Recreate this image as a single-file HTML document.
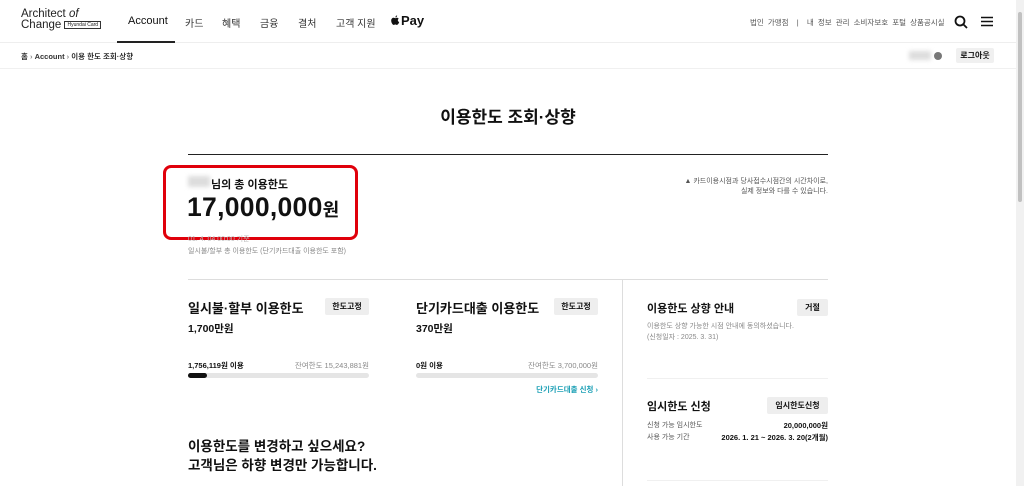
<!DOCTYPE html>
<html><head><meta charset="utf-8"><style>
*{margin:0;padding:0;box-sizing:border-box}
body{width:1024px;height:486px;overflow:hidden;background:#fff;font-family:"Liberation Sans","Noto Sans CJK KR",sans-serif;color:#111;position:relative}
.a{position:absolute;white-space:nowrap}
.btn{position:absolute;background:#eee;font-size:8px;font-weight:bold;display:flex;align-items:center;justify-content:center;border-radius:2px}
.g{color:#888}
</style></head><body>
<div class="a" style="left:0;top:0;width:1024px;height:43px;border-bottom:1px solid #eee"></div>
<div class="a" style="left:21px;top:9px;font-size:11.5px;line-height:11px;color:#222">Architect <i>of</i><br>Change <span style="font-size:5px;border:1px solid #333;padding:0 2px;vertical-align:2px">Hyundai Card</span></div>
<div class="a" style="left:128px;top:15px;font-size:11px">Account</div>
<div class="a" style="left:117px;top:41px;width:58px;height:2px;background:#222"></div>
<div class="a" style="left:185px;top:15px;font-size:10px;color:#333">카드</div>
<div class="a" style="left:222px;top:15px;font-size:10px;color:#333">혜택</div>
<div class="a" style="left:260px;top:15px;font-size:10px;color:#333">금융</div>
<div class="a" style="left:298px;top:15px;font-size:10px;color:#333">결처</div>
<div class="a" style="left:336px;top:15px;font-size:10px;color:#333">고객 지원</div>
<svg class="a" style="left:391px;top:15px" width="9" height="11" viewBox="0 0 9 11"><path d="M4.5 3.2C5.3 2.6 6.8 2.5 7.7 3.8C6.4 4.6 6.6 6.6 8.2 7.1C7.7 8.5 6.9 9.9 5.9 9.9C5.2 9.9 5 9.5 4.3 9.5C3.6 9.5 3.3 9.9 2.7 9.9C1.6 9.9 0.2 7.5 0.2 5.6C0.2 3.6 1.6 2.7 2.8 2.8C3.5 2.8 4 3.2 4.5 3.2Z" fill="#111"/><path d="M4.4 2.5C4.3 1.5 5.1 0.5 6.1 0.4C6.2 1.4 5.3 2.5 4.4 2.5Z" fill="#111"/></svg>
<div class="a" style="left:401px;top:13px;font-size:13px;font-weight:bold">Pay</div>
<div class="a" style="left:750px;top:17px;font-size:7.5px;color:#555;word-spacing:2px">법인 가맹점 &nbsp;| &nbsp;내 정보 관리 소비자보호 포털 상품공시실</div>
<svg class="a" style="left:954px;top:15px" width="14" height="14"><circle cx="6" cy="6" r="4.5" fill="none" stroke="#111" stroke-width="1.8"/><line x1="9.5" y1="9.5" x2="13" y2="13" stroke="#111" stroke-width="1.8"/></svg>
<svg class="a" style="left:981px;top:16px" width="12" height="11"><path d="M0 1.5H12M0 5.5H12M0 9.5H12" stroke="#111" stroke-width="1.5"/></svg>
<div class="a" style="left:1016px;top:0;width:8px;height:486px;background:#f1f1f1"></div>
<div class="a" style="left:1018px;top:12px;width:4px;height:190px;background:#c1c1c1;border-radius:2px"></div>
<div class="a" style="left:0;top:68px;width:1016px;border-bottom:1px solid #f0f0f0"></div>
<div class="a" style="left:21px;top:51px;font-size:7.5px;font-weight:bold;color:#333">홈 <span class="g">›</span> Account <span class="g">›</span> 이용 한도 조회·상향</div>
<div class="a" style="left:909px;top:51px;width:22px;height:9px;background:#ddd;filter:blur(2px)"></div>
<div class="a" style="left:934px;top:52px;width:8px;height:8px;border-radius:50%;background:#777"></div>
<div class="btn" style="left:956px;top:48px;width:38px;height:15px;background:#f0f0f0">로그아웃</div>
<div class="a" style="left:0;width:1016px;top:103px;text-align:center;font-size:17px;font-weight:bold">이용한도 조회·상향</div>
<div class="a" style="left:188px;top:154px;width:640px;height:1px;background:#222"></div>
<div class="a" style="left:163px;top:165px;width:195px;height:75px;border:3px solid #e0000b;border-radius:8px"></div>
<div class="a" style="left:188px;top:176px;width:22px;height:11px;background:#ddd;filter:blur(2px)"></div>
<div class="a" style="left:211px;top:176px;font-size:11px;font-weight:bold">님의 총 이용한도</div>
<div class="a" style="left:187px;top:192px;font-size:26.5px;font-weight:bold;letter-spacing:0.3px">17,000,000<span style="font-size:18px">원</span></div>
<div class="a g" style="left:188px;top:234px;font-size:7px;color:#bbb">01. 4. 04 00:00 기준</div>
<div class="a g" style="left:188px;top:246px;font-size:7px">일시불/할부 총 이용한도 (단기카드대출 이용한도 포함)</div>
<div class="a" style="right:196px;top:177px;font-size:7px;color:#555;text-align:right;line-height:10px">▲ 카드이용시점과 당사접수시점간의 시간차이로,<br>실제 정보와 다를 수 있습니다.</div>
<div class="a" style="left:188px;top:279px;width:640px;height:1px;background:#ddd"></div>
<div class="a" style="left:622px;top:280px;width:1px;height:206px;background:#ddd"></div>
<div class="a" style="left:188px;top:298px;font-size:13px;font-weight:bold">일시불·할부 이용한도</div>
<div class="btn" style="left:325px;top:298px;width:44px;height:17px">한도고정</div>
<div class="a" style="left:188px;top:321px;font-size:10.5px;font-weight:bold">1,700만원</div>
<div class="a" style="left:188px;top:360px;font-size:7.5px;font-weight:bold">1,756,119원 이용</div>
<div class="a g" style="left:293px;top:360px;font-size:7.5px;width:76px;text-align:right">잔여한도 15,243,881원</div>
<div class="a" style="left:188px;top:373px;width:181px;height:5px;background:#e5e5e5;border-radius:3px"></div>
<div class="a" style="left:188px;top:373px;width:19px;height:5px;background:#111;border-radius:3px"></div>
<div class="a" style="left:416px;top:298px;font-size:13px;font-weight:bold">단기카드대출 이용한도</div>
<div class="btn" style="left:554px;top:298px;width:44px;height:17px">한도고정</div>
<div class="a" style="left:416px;top:321px;font-size:10.5px;font-weight:bold">370만원</div>
<div class="a" style="left:416px;top:360px;font-size:7.5px;font-weight:bold">0원 이용</div>
<div class="a g" style="left:500px;top:360px;font-size:7.5px;width:98px;text-align:right">잔여한도 3,700,000원</div>
<div class="a" style="left:416px;top:373px;width:182px;height:5px;background:#e5e5e5;border-radius:3px"></div>
<div class="a" style="left:500px;top:384px;width:98px;text-align:right;font-size:7.5px;font-weight:bold;color:#1a9fb5">단기카드대출 신청 ›</div>
<div class="a" style="left:188px;top:437px;font-size:13.5px;font-weight:bold;line-height:19px">이용한도를 변경하고 싶으세요?<br>고객님은 하향 변경만 가능합니다.</div>
<div class="a" style="left:647px;top:300px;font-size:11px;font-weight:bold">이용한도 상향 안내</div>
<div class="btn" style="left:797px;top:299px;width:31px;height:17px">거절</div>
<div class="a g" style="left:647px;top:321px;font-size:7px;line-height:11px">이용한도 상향 가능한 시점 안내에 동의하셨습니다.<br>(신청일자 : 2025. 3. 31)</div>
<div class="a" style="left:647px;top:378px;width:181px;height:1px;background:#f0f0f0"></div>
<div class="a" style="left:647px;top:398px;font-size:11px;font-weight:bold">임시한도 신청</div>
<div class="btn" style="left:767px;top:397px;width:61px;height:17px">임시한도신청</div>
<div class="a g" style="left:647px;top:420px;font-size:7px;color:#555">신청 가능 임시한도</div>
<div class="a" style="left:700px;top:420px;width:128px;text-align:right;font-size:7.5px;font-weight:bold">20,000,000원</div>
<div class="a g" style="left:647px;top:432px;font-size:7px;color:#555">사용 가능 기간</div>
<div class="a" style="left:700px;top:432px;width:128px;text-align:right;font-size:7.5px;font-weight:bold">2026. 1. 21 ~ 2026. 3. 20(2개월)</div>
<div class="a" style="left:647px;top:480px;width:181px;height:1px;background:#f0f0f0"></div>
</body></html>
